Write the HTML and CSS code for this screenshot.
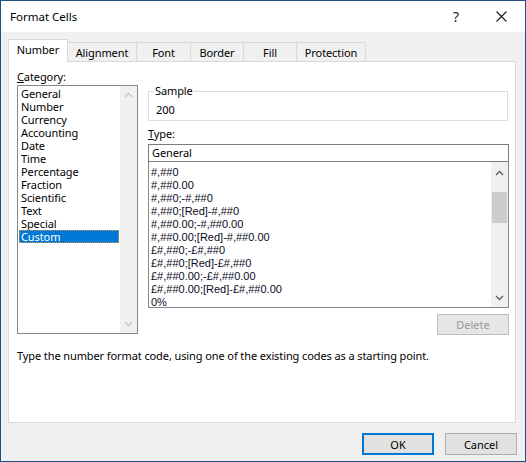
FILE: index.html
```html
<!DOCTYPE html>
<html>
<head>
<meta charset="utf-8">
<link rel="stylesheet" href="styles.css">
</head>
<body>
<div class="window">
  <div class="titlebar">
    <span class="title">Format Cells</span>
    <span class="help">?</span>
    <span class="close"><svg width="11" height="11" viewBox="0 0 11 11"><path d="M0.5 0.5 L10.5 10.5 M10.5 0.5 L0.5 10.5" stroke="#1a1a1a" stroke-width="1.1" fill="none"/></svg></span>
  </div>
  <div class="body">
    <div class="tabs">
      <div class="tab active">Number</div>
      <div class="tab t-align">Alignment</div>
      <div class="tab t-font">Font</div>
      <div class="tab t-border">Border</div>
      <div class="tab t-fill">Fill</div>
      <div class="tab t-prot">Protection</div>
    </div>
    <div class="panel">
      <div class="columns">
        <div class="left">
          <div class="label"><u>C</u>ategory:</div>
          <div class="listbox cat">
            <ul class="items">
              <li>General</li>
              <li>Number</li>
              <li>Currency</li>
              <li>Accounting</li>
              <li>Date</li>
              <li>Time</li>
              <li>Percentage</li>
              <li>Fraction</li>
              <li>Scientific</li>
              <li>Text</li>
              <li>Special</li>
              <li class="selected">Custom</li>
            </ul>
            <div class="scrollbar">
              <svg class="arrow" width="9" height="6" viewBox="0 0 9 6"><path d="M1 5 L4.5 1.5 L8 5" stroke="#c4c4c4" stroke-width="1.3" fill="none"/></svg>
              <div class="track"></div>
              <svg class="arrow" width="9" height="6" viewBox="0 0 9 6"><path d="M1 1 L4.5 4.5 L8 1" stroke="#c4c4c4" stroke-width="1.3" fill="none"/></svg>
            </div>
          </div>
        </div>
        <div class="right">
          <fieldset class="sample">
            <legend>Sample</legend>
            <div class="sample-value">200</div>
          </fieldset>
          <div class="label type-label"><u>T</u>ype:</div>
          <div class="type-input">General</div>
          <div class="listbox types">
            <ul class="codes">
              <li>#,##0</li>
              <li>#,##0.00</li>
              <li>#,##0;-#,##0</li>
              <li>#,##0;[Red]-#,##0</li>
              <li>#,##0.00;-#,##0.00</li>
              <li>#,##0.00;[Red]-#,##0.00</li>
              <li>£#,##0;-£#,##0</li>
              <li>£#,##0;[Red]-£#,##0</li>
              <li>£#,##0.00;-£#,##0.00</li>
              <li>£#,##0.00;[Red]-£#,##0.00</li>
              <li>0%</li>
            </ul>
            <div class="scrollbar">
              <svg class="arrow" width="9" height="6" viewBox="0 0 9 6"><path d="M1 5 L4.5 1.5 L8 5" stroke="#606060" stroke-width="1.4" fill="none"/></svg>
              <div class="track"><div class="thumb"></div></div>
              <svg class="arrow" width="9" height="6" viewBox="0 0 9 6"><path d="M1 1 L4.5 4.5 L8 1" stroke="#606060" stroke-width="1.4" fill="none"/></svg>
            </div>
          </div>
          <div class="delete-row"><button class="btn disabled">Delete</button></div>
        </div>
      </div>
      <p class="desc">Type the number format code, using one of the existing codes as a starting point.</p>
    </div>
    <div class="buttons">
      <button class="btn default">OK</button>
      <button class="btn">Cancel</button>
    </div>
  </div>
</div>
</body>
</html>
```
FILE: styles.css
```css
html, body {
  margin: 0;
  padding: 0;
  background: #ffffff;
}
body {
  font-family: "Noto Sans", "Open Sans", sans-serif;
  font-size: 11px;
  letter-spacing: -0.1px;
  color: #000;
}
.window {
  width: 526px;
  height: 462px;
  box-sizing: border-box;
  border: 1px solid #1f4f7f;
  display: flex;
  flex-direction: column;
  background: #f0f0f0;
}
.titlebar {
  height: 31px;
  flex: none;
  background: #ffffff;
  display: flex;
  align-items: center;
  padding-left: 9px;
}
.title {
  flex: 1;
  font-size: 11.5px;
  letter-spacing: 0;
}
.help {
  font-size: 14px;
  width: 20px;
  text-align: center;
  margin-right: 30px;
  color: #1a1a1a;
}
.close {
  width: 11px;
  height: 11px;
  margin-right: 18px;
  display: flex;
}
.body {
  flex: 1;
  display: flex;
  flex-direction: column;
  padding: 7px 9px 0 7px;
}
.tabs {
  display: flex;
  align-items: flex-end;
  height: 22px;
  position: relative;
  z-index: 1;
}
.tab {
  box-sizing: border-box;
  height: 19px;
  border: 1px solid #d9d9d9;
  border-left: none;
  border-bottom: none;
  background: #f0f0f0;
  display: flex;
  align-items: center;
  justify-content: center;
  font-size: 11px;
  line-height: 1;
}
.tab.active {
  width: 60px;
  border-left: 1px solid #d9d9d9;
  background: #ffffff;
  margin-bottom: -1px;
  height: 23px;
  padding-bottom: 3px;
}
.t-align { width: 69px; }
.t-font { width: 54px; }
.t-border { width: 53px; }
.t-fill { width: 53px; }
.t-prot { width: 69px; }
.panel {
  box-sizing: border-box;
  width: 508px;
  height: 362px;
  background: #ffffff;
  border: 1px solid #d9d9d9;
  padding: 8px 6px 0 8px;
  display: flex;
  flex-direction: column;
}
.columns {
  display: flex;
  gap: 10px;
}
.left {
  width: 121px;
  display: flex;
  flex-direction: column;
}
.label {
  font-size: 11px;
  line-height: 13px;
  height: 13px;
}
.label u {
  text-decoration-thickness: 1px;
  text-underline-offset: 1px;
}
.listbox {
  box-sizing: border-box;
  border: 1px solid #828790;
  background: #fff;
  display: flex;
}
.cat {
  margin-top: 2px;
  height: 249px;
}
ul {
  list-style: none;
  margin: 0;
  padding: 0;
}
.items {
  flex: 1;
  padding: 1px 1px 0 1px;
}
.items li {
  height: 13px;
  line-height: 13px;
  font-size: 11px;
  padding-left: 2px;
  box-sizing: border-box;
}
.items li.selected {
  background: #0078d7;
  color: #ffffff;
  outline: 1px dotted #d39a46;
  outline-offset: -1px;
}
.scrollbar {
  width: 17px;
  flex: none;
  background: #f0f0f0;
  display: flex;
  flex-direction: column;
  align-items: center;
}
.scrollbar .arrow {
  flex: none;
  margin: 6px 0;
}
.track {
  flex: 1;
  width: 100%;
}
.right {
  flex: 1;
  display: flex;
  flex-direction: column;
}
.sample {
  margin: 14px 1px 0 0;
  padding: 0 7px 3px 7px;
  border: 1px solid #dcdcdc;
  box-sizing: border-box;
  min-width: 0;
}
.sample legend {
  padding: 0 1px;
  margin-left: -2px;
  font-size: 11px;
  line-height: 14px;
}
.sample-value {
  font-size: 11px;
  line-height: 14px;
  margin-top: 5px;
}
.type-label {
  margin-top: 6px;
}
.type-input {
  box-sizing: border-box;
  margin-top: 4px;
  height: 18px;
  border: 1px solid #7a7a7a;
  padding-left: 3px;
  font-size: 11px;
  line-height: 16px;
}
.types {
  height: 146px;
  border-top: none;
}
.codes {
  flex: 1;
  padding: 4px 2px 0 2px;
}
.codes li {
  font-family: "Liberation Sans", Arial, sans-serif;
  font-size: 11px;
  letter-spacing: 0;
  height: 13px;
  line-height: 13px;
  color: #0a0a1e;
}
.types .scrollbar .arrow {
  margin: 8px 0 6px;
}
.thumb {
  width: 15px;
  margin: 10px auto 0;
  height: 31px;
  background: #cdcdcd;
}
.delete-row {
  display: flex;
  justify-content: flex-end;
  margin-top: 6px;
}
.btn {
  box-sizing: border-box;
  width: 72px;
  height: 21px;
  border: 1px solid #adadad;
  background: #e1e1e1;
  font-family: "Noto Sans", "Open Sans", sans-serif;
  font-size: 11px;
  padding: 0;
  color: #000;
}
.btn.disabled {
  border-color: #bfbfbf;
  background: #e6e6e6;
  color: #9a9a9a;
}
.btn.default {
  border: 2px solid #0078d7;
}
.desc {
  margin: 14px 0 0 0;
  font-size: 11px;
  line-height: 14px;
}
.buttons {
  display: flex;
  justify-content: flex-end;
  gap: 11px;
  margin-top: 10px;
  margin-right: -1px;
}
.buttons .btn {
  height: 22px;
}
```
